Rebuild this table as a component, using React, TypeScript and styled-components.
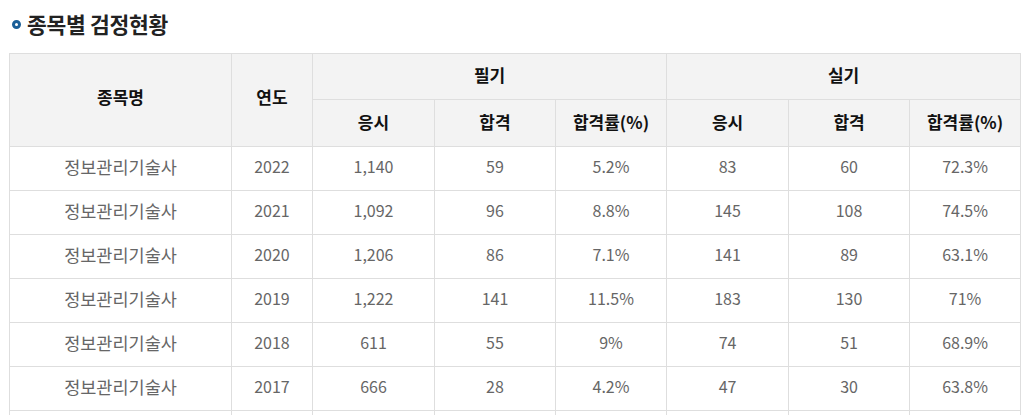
import React from "react";
import styled, { createGlobalStyle } from "styled-components";

const Global = createGlobalStyle`
  html, body { margin: 0; padding: 0; background: #fff; }
  body { font-family: "Noto Sans CJK KR", "Noto Sans", sans-serif; }
`;

const Page = styled.div`
  padding: 9px 7px 0 9px;
`;

const Title = styled.h3`
  display: flex;
  align-items: center;
  gap: 6px;
  margin: 0 0 16px 0;
  height: 28px;
  font-size: 21.5px;
  font-weight: 700;
  color: #222;
  letter-spacing: -0.3px;
`;

const Bullet = styled.span`
  width: 3px;
  height: 3px;
  margin-left: 3px;
  margin-top: 2px;
  border-radius: 50%;
  border: 3px solid #1b5f98;
  background: #fff;
  flex: none;
`;

const Table = styled.table`
  border-collapse: collapse;
  table-layout: fixed;
  width: 1012px;
`;

const Th = styled.th<{ $h?: number; $tall?: boolean }>`
  border: 1px solid #dedede;
  background: #f3f3f3;
  height: ${(p) => p.$h ?? 41}px;
  padding: 0 0 ${(p) => (p.$tall ? 8 : 4)}px 0;
  font-size: 17px;
  font-weight: 700;
  color: #111;
  text-align: center;
  vertical-align: middle;
`;

const Td = styled.td<{ $name?: boolean }>`
  border: 1px solid #dedede;
  height: 38px;
  padding: 0 0 5px 0;
  font-size: ${(p) => (p.$name ? "17.5px" : "16px")};
  font-weight: 400;
  color: #666;
  text-align: center;
  vertical-align: middle;
`;

const widths = [222, 81, 122, 121, 111, 122, 121, 111];

const rows: string[][] = [
  ["정보관리기술사", "2022", "1,140", "59", "5.2%", "83", "60", "72.3%"],
  ["정보관리기술사", "2021", "1,092", "96", "8.8%", "145", "108", "74.5%"],
  ["정보관리기술사", "2020", "1,206", "86", "7.1%", "141", "89", "63.1%"],
  ["정보관리기술사", "2019", "1,222", "141", "11.5%", "183", "130", "71%"],
  ["정보관리기술사", "2018", "611", "55", "9%", "74", "51", "68.9%"],
  ["정보관리기술사", "2017", "666", "28", "4.2%", "47", "30", "63.8%"],
  ["정보관리기술사", "2016", "592", "37", "6.3%", "52", "35", "67.3%"],
];

export default function App() {
  return (
    <Page>
      <Global />
      <Title>
        <Bullet />
        종목별 검정현황
      </Title>
      <Table>
        <colgroup>
          {widths.map((w, i) => (
            <col key={i} style={{ width: w }} />
          ))}
        </colgroup>
        <thead>
          <tr>
            <Th rowSpan={2} $tall>
              종목명
            </Th>
            <Th rowSpan={2} $tall>
              연도
            </Th>
            <Th colSpan={3}>필기</Th>
            <Th colSpan={3}>실기</Th>
          </tr>
          <tr>
            <Th $h={42}>응시</Th>
            <Th $h={42}>합격</Th>
            <Th $h={42}>합격률(%)</Th>
            <Th $h={42}>응시</Th>
            <Th $h={42}>합격</Th>
            <Th $h={42}>합격률(%)</Th>
          </tr>
        </thead>
        <tbody>
          {rows.map((r, i) => (
            <tr key={i}>
              {r.map((c, j) => (
                <Td key={j} $name={j === 0}>
                  {c}
                </Td>
              ))}
            </tr>
          ))}
        </tbody>
      </Table>
    </Page>
  );
}
